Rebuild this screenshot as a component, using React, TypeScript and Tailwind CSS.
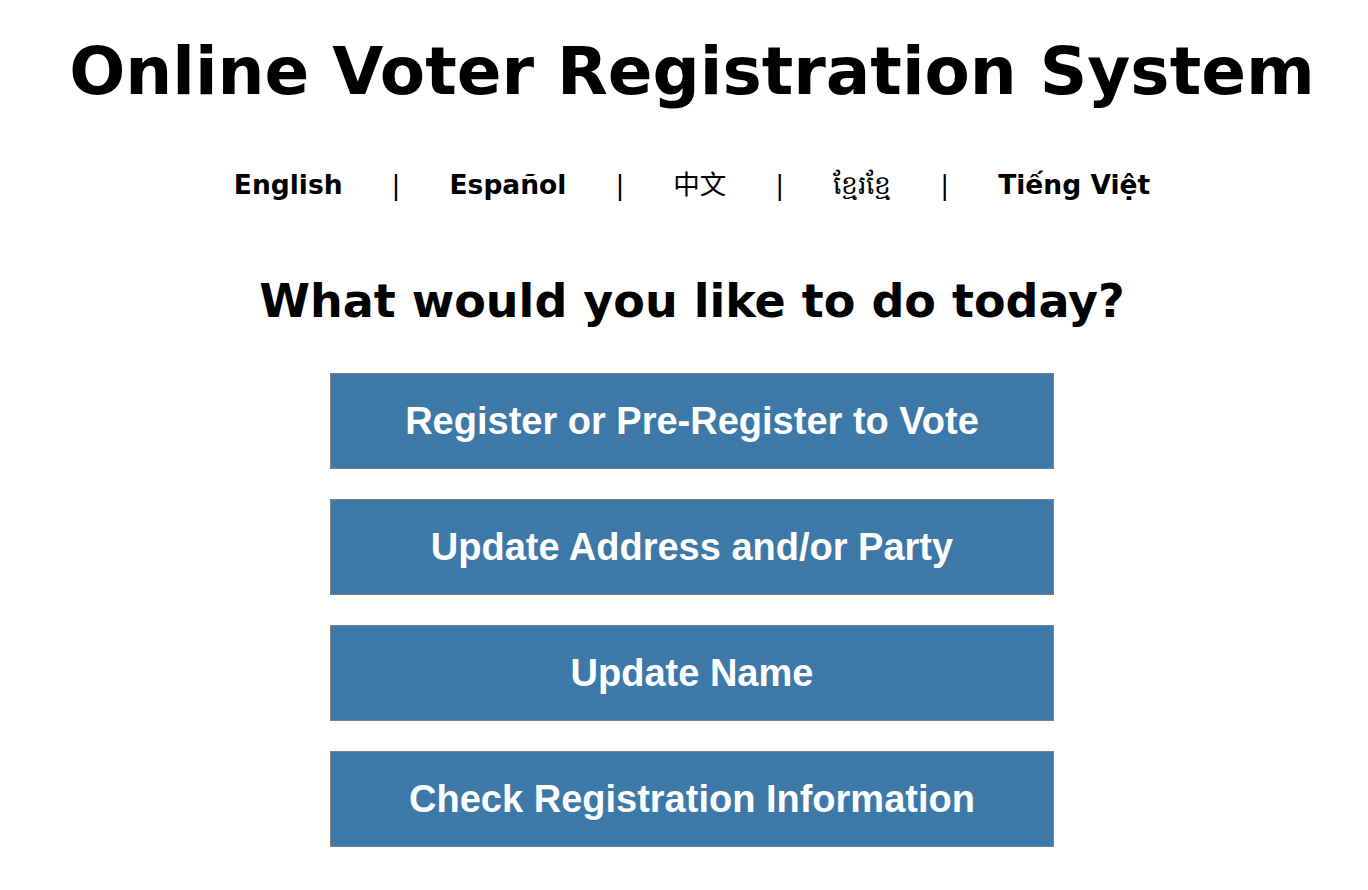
export default function App() {
  const langs = ["English", "Español", "中文", "ខ្មែរខ្មែ", "Tiếng Việt"];
  const buttons = [
    "Register or Pre-Register to Vote",
    "Update Address and/or Party",
    "Update Name",
    "Check Registration Information",
  ];
  return (
    <div className="w-[1368px] min-h-[890px] bg-white text-black pl-[16px] flex flex-col items-center">
      <h1 className="mt-[35px] text-[66px] leading-[74px] font-bold whitespace-nowrap font-['DejaVu_Sans','Noto_Sans_CJK_SC',sans-serif]">
        Online Voter Registration System
      </h1>
      <div className="mt-[60px] flex items-center text-[26.5px] leading-[32px] font-['DejaVu_Sans','Noto_Sans_CJK_SC',sans-serif]">
        {langs.map((l, i) => (
          <div key={l} className="flex items-center">
            {i > 0 && <span className="mx-[49px] font-normal">|</span>}
            <a className={i === 2 || i === 3 ? "font-normal" : "font-bold"}>{l}</a>
          </div>
        ))}
      </div>
      <h2 className="mt-[74px] text-[46px] leading-[52px] font-bold whitespace-nowrap font-['DejaVu_Sans',sans-serif]">
        What would you like to do today?
      </h2>
      <div className="mt-[46px] flex flex-col gap-[30px]">
        {buttons.map((b) => (
          <button
            key={b}
            className="w-[724px] h-[96px] bg-[#3d79a8] border border-[#808080] text-white font-bold text-[38px] font-['Liberation_Sans',Arial,sans-serif]"
          >
            {b}
          </button>
        ))}
      </div>
    </div>
  );
}
